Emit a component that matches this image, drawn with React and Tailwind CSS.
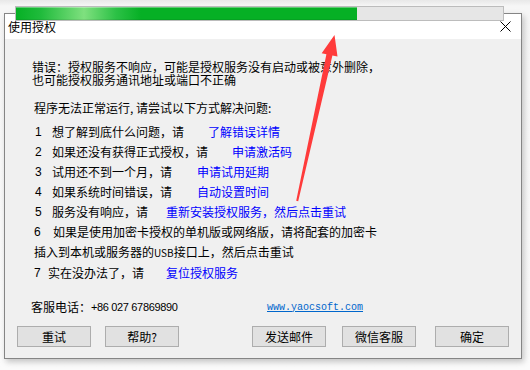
import React from "react";

const items = [
  { n: "1", text: "想了解到底什么问题，请", link: "了解错误详情", gap: "ml-[24px]", nw: "w-[18px]" },
  { n: "2", text: "如果还没有获得正式授权，请", link: "申请激活码", gap: "ml-[24px]", nw: "w-[18px]" },
  { n: "3", text: "试用还不到一个月，请", link: "申请试用延期", gap: "ml-[25px]", nw: "w-[18px]" },
  { n: "4", text: "如果系统时间错误，请", link: "自动设置时间", gap: "ml-[25px]", nw: "w-[18px]" },
  { n: "5", text: "服务没有响应，请", link: "重新安装授权服务，然后点击重试", gap: "ml-[18px]", nw: "w-[18px]" },
];

const buttons = [
  { label: "重试", gap: "ml-0" },
  { label: "帮助?", gap: "ml-[14px]" },
  { label: "发送邮件", gap: "ml-[73px]" },
  { label: "微信客服", gap: "ml-[16px]" },
  { label: "确定", gap: "ml-[19px]" },
];

function Num({ children, className }) {
  return (
    <span className={`${className} shrink-0 font-['Liberation_Sans',sans-serif] text-[12px]`}>
      {children}
    </span>
  );
}

export default function App() {
  return (
    <div className="relative w-[530px] h-[370px] overflow-hidden bg-[linear-gradient(#e8e8e8_0px,#f6f6f6_6px,#fbfbfb_100%)] font-['Noto_Sans_CJK_SC',sans-serif] text-[12px] text-black">
      {/* Dialog window */}
      <div className="ml-[4px] mt-[13px] w-[518px] h-[346px] border border-[#858585] bg-[#f0f0f0] flex flex-col shadow-[2px_3px_6px_rgba(0,0,0,0.22)]">
        {/* Title bar */}
        <div className="h-[25px] bg-white flex items-center justify-between pl-[3px] pr-[10px]">
          <span className="leading-none">使用授权</span>
          <svg width="11" height="11" viewBox="0 0 11 11">
            <path d="M0.5 0.5 L10.5 10.5 M10.5 0.5 L0.5 10.5" stroke="#000" strokeWidth="1" fill="none" />
          </svg>
        </div>

        {/* Body */}
        <div className="pl-[27px] pt-[21px]">
          <div className="leading-[13px]">
            <div>错误：授权服务不响应，可能是授权服务没有启动或被意外删除，</div>
            <div>也可能授权服务通讯地址或端口不正确</div>
          </div>

          <div className="mt-[12px] ml-[2px] leading-[20px]">程序无法正常运行, 请尝试以下方式解决问题:</div>

          <div className="mt-[4px] ml-[2px]">
            {items.map((it) => (
              <div key={it.n} className="flex h-[20px] leading-[20px]">
                <Num className={`${it.nw} pl-[1px]`}>{it.n}</Num>
                <span>{it.text}</span>
                <span className={`${it.gap} text-[#0000ff]`}>{it.link}</span>
              </div>
            ))}
            <div className="flex h-[20px] leading-[20px]">
              <Num className="w-[19px]">6</Num>
              <span>如果是使用加密卡授权的单机版或网络版，请将配套的加密卡</span>
            </div>
            <div className="h-[19px] leading-[19px]">
              插入到本机或服务器的<span className="text-[10px]">USB</span>接口上，然后点击重试
            </div>
            <div className="mt-[2px] flex h-[20px] leading-[20px]">
              <Num className="w-[14px]">7</Num>
              <span>实在没办法了，请</span>
              <span className="ml-[22px] text-[#0000ff]">复位授权服务</span>
            </div>
          </div>

          <div className="mt-[14px] -ml-[1px] flex h-[20px] items-center">
            <div className="w-[236px] flex items-center">
              <span>客服电话：</span>
              <span className="font-['Liberation_Sans',sans-serif] text-[11px] tracking-[-0.35px]">+86 027 67869890</span>
            </div>
            <span className="font-['Liberation_Mono',monospace] text-[10px] text-[#0066cc] underline">www.yaocsoft.com</span>
          </div>
        </div>

        {/* Buttons */}
        <div className="mt-[9px] pl-[12px] flex">
          {buttons.map((b) => (
            <div
              key={b.label}
              className={`${b.gap} w-[74px] h-[21px] border border-[#adadad] bg-[#e1e1e1] flex items-center justify-center text-[12px] leading-none`}
            >
              {b.label}
            </div>
          ))}
        </div>
      </div>

      {/* Progress bar overlay */}
      <div className="absolute left-[15px] top-[6px] w-[489px] h-[15px] border border-[#bcbcbc] bg-[#e6e6e6]">
        <div className="h-full w-[341px] bg-[linear-gradient(90deg,#06b025_0px,#20bb3c_25px,#7fe07f_68px,#2cc146_100px,#06b025_125px)] shadow-[inset_0_1px_0_rgba(255,255,255,0.35),inset_0_-1px_0_rgba(0,0,0,0.08)]" />
      </div>

      {/* Red arrow annotation */}
      <svg className="absolute left-0 top-0 pointer-events-none" width="530" height="370" viewBox="0 0 530 370">
        <polygon
          points="296.2,200.8 326.4,54.2 321.7,53.2 334.5,35 337.5,56.6 332.4,55.4 298.2,201.2"
          fill="#ff3b3b"
        />
      </svg>
    </div>
  );
}
